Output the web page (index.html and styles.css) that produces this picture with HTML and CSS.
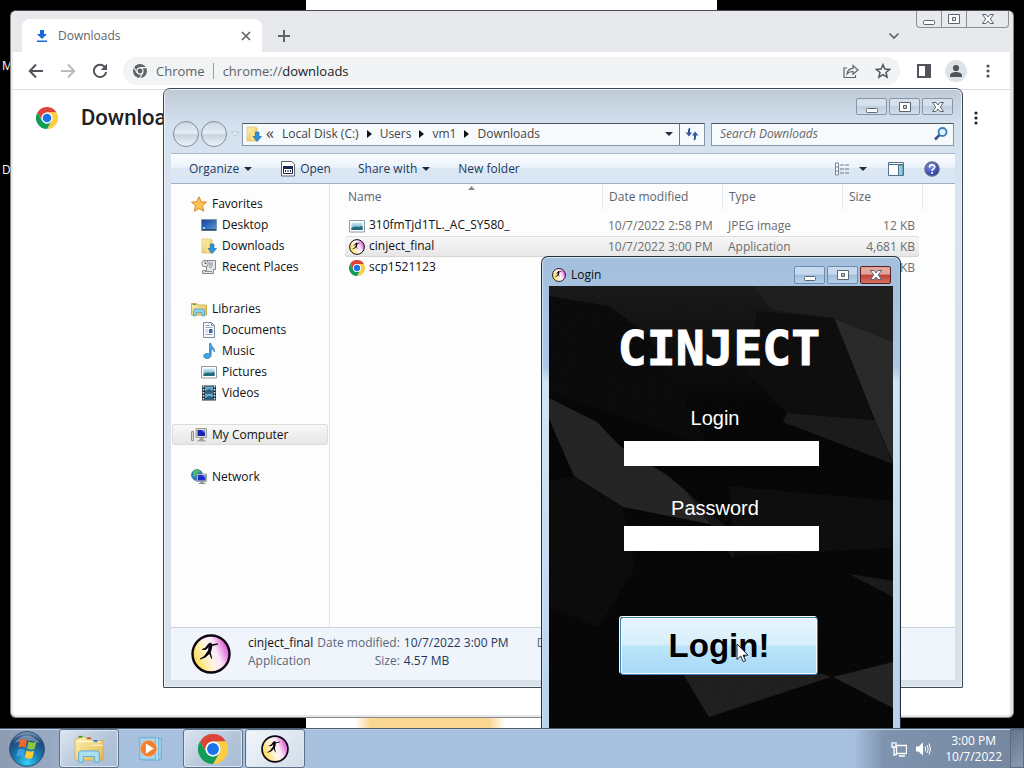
FILE: index.html
```html
<!DOCTYPE html>
<html lang="en">
<head>
    <meta charset="utf-8">
    <meta name="viewport" content="width=device-width, initial-scale=1">
    <title>Desktop</title>
    <link rel="stylesheet" href="styles.css">
</head>
<body>
<svg class="defs" aria-hidden="true">
    <defs>
        <linearGradient id="folder-g" x1="0" y1="0" x2="1" y2="1"><stop offset="0" stop-color="#fdf3b4"/><stop offset="1" stop-color="#e3b84e"/></linearGradient>
        <linearGradient id="screen-g" x1="0" y1="0" x2="1" y2="1"><stop offset="0" stop-color="#123f94"/><stop offset="1" stop-color="#5c9be0"/></linearGradient>
        <linearGradient id="ball-g" x1="0" y1=".7" x2="1" y2=".3"><stop offset="0" stop-color="#ffd83a"/><stop offset=".45" stop-color="#fff6e6"/><stop offset=".65" stop-color="#fbe6f8"/><stop offset="1" stop-color="#d63fd0"/></linearGradient>
        <linearGradient id="sky-g" x1="0" y1="0" x2="0" y2="1"><stop offset="0" stop-color="#cfeaf7"/><stop offset=".5" stop-color="#8cc5d8"/><stop offset="1" stop-color="#1f5d73"/></linearGradient>
        <linearGradient id="top-g" x1="0" y1="0" x2="0" y2="1"><stop offset="0" stop-color="#181818"/><stop offset="1" stop-color="#050505"/></linearGradient>
        <radialGradient id="orb-g" cx=".5" cy=".9" r=".9"><stop offset="0" stop-color="#35d0f5"/><stop offset=".4" stop-color="#1b7db5"/><stop offset=".8" stop-color="#1d4775"/><stop offset="1" stop-color="#8fa9c4"/></radialGradient>
        <radialGradient id="help-g" cx=".4" cy=".3" r=".8"><stop offset="0" stop-color="#7f93e8"/><stop offset="1" stop-color="#15299c"/></radialGradient>
    </defs>
    <symbol id="chrome" viewBox="0 0 48 48">
        <path fill="#db4437" d="M3.200 12A24 24 0 0 1 44.800 12H24A12 12 0 0 0 13.600 30z"/>
        <path fill="#ffcd40" d="M44.800 12A24 24 0 0 1 24 48L34.400 30A12 12 0 0 0 24 12z"/>
        <path fill="#0f9d58" d="M24 48A24 24 0 0 1 3.200 12L13.600 30A12 12 0 0 0 34.400 30z"/>
        <circle cx="24" cy="24" r="12" fill="#fff"/><circle cx="24" cy="24" r="9.500" fill="#1a73e8"/>
    </symbol>
    <symbol id="chrome-mono" viewBox="0 0 48 48">
        <circle cx="24" cy="24" r="24" fill="#5f6368"/>
        <circle cx="24" cy="24" r="10.500" fill="none" stroke="#f1f3f4" stroke-width="4"/>
        <path d="M24 12.500H45M14 30L3.500 12M34 30L23 48" stroke="#f1f3f4" stroke-width="4"/>
    </symbol>
    <symbol id="ball" viewBox="0 0 40 40">
        <circle cx="20" cy="20" r="18.500" fill="url(#ball-g)" stroke="#0c0410" stroke-width="2.400"/>
        <path d="M17.500 9.500l2.500-1 1 1.700 6-1v1.200l-5.700 1.500-.6 3.300-1 3.300 1.300 5-.6 2-2-5.500-4 3.500-5 2-.5-1 4-2.300 4-5.500.7-3.500-2.500 2.500-4 .3v-1l3-1.200z" fill="#0c0410"/>
    </symbol>
    <symbol id="min" viewBox="0 0 16 12"><rect x="2.500" y="7.500" width="11" height="4" rx="1" fill="#fdfdfd" stroke="#5b6572"/></symbol>
    <symbol id="max" viewBox="0 0 16 12"><path d="M2.500 1.500h11v9h-11zM6.500 4.500v3h3v-3z" fill="#fdfdfd" fill-rule="evenodd" stroke="#5b6572"/></symbol>
    <symbol id="close" viewBox="0 0 16 12"><path d="M2.500 1.500h3.500l2 2.500 2-2.500h3.500L10.300 6l3.200 4.500h-3.500L8 8l-2 2.500H2.500L5.700 6z" fill="#fdfdfd" stroke="#5b6572"/></symbol>
    <symbol id="star" viewBox="0 0 16 16"><path d="M8 .8l2.200 4.900 5.200.5-3.900 3.600 1.200 5.400L8 12.400l-4.700 2.800 1.200-5.400L.6 6.200l5.200-.5z" fill="#fdc454" stroke="#d8862a"/></symbol>
    <symbol id="desktop" viewBox="0 0 16 16"><path d="M.5 2.500h15v11H.5z" fill="url(#screen-g)" stroke="#7d97ae"/><path d="M1 12h14v1.500H1z" fill="#274866"/><path d="M2 10h2v2H2z" fill="#9fd4ff"/></symbol>
    <symbol id="downloads" viewBox="0 0 16 16"><path d="M1 1h8l2 1v13H1z" fill="url(#folder-g)" stroke="#dcb75c" stroke-width=".6"/><path d="M5 2v13l3-1V1z" fill="#f8e594"/><path d="M9.500 6h3.500v4.500h2.500L11.200 15.500 7 10.500h2.500z" fill="#2f94d6" stroke="#1565a5" stroke-width=".6"/></symbol>
    <symbol id="recent" viewBox="0 0 16 16"><path d="M5.500 1.500h9v9h-2v4h-11v-3h4z" fill="#e4e6e8" stroke="#85898e"/><path d="M8 4h4M8 6h4M8 8h3M4 12.500h7" stroke="#8c9196"/><circle cx="4" cy="4.500" r="3.300" fill="#e9eef1" stroke="#7f868d"/><path d="M4 2.500v2h1.500" fill="none" stroke="#555"/></symbol>
    <symbol id="libraries" viewBox="0 0 16 16"><path d="M.5 2.500h5l1 1.500h9v10H.5z" fill="url(#folder-g)" stroke="#cfae52"/><path d="M1.500 3.500h3.500" stroke="#53a83a"/><path d="M2.500 15V9.500q0-1.500 1.500-1.500h8q1.500 0 1.500 1.500V15H11v-3.500H5V15z" fill="#8bd3f2" stroke="#4399c8" stroke-width=".7"/></symbol>
    <symbol id="documents" viewBox="0 0 16 16"><path d="M2.500.5h8l3 3v12h-11z" fill="#fbfcfd" stroke="#7e8b98"/><path d="M10.500.5v3h3" fill="none" stroke="#7e8b98"/><path d="M4.500 3.500h4M4.500 5.500h7M4.500 8h2M4.500 10h2M4.500 12.500h7" stroke="#94a6c4"/><path d="M8 7h3.500v4H8z" fill="#3565a5"/></symbol>
    <symbol id="music" viewBox="0 0 16 16"><path d="M8.500.5h1.500c0 3.500 4 4 3.500 8.500-.5-2-1.500-2.700-3.300-3V12c0 2-1.700 3.500-4.200 3.500-4.500 0-4.500-5 .3-5 .8 0 1.500.1 2.200.5z" fill="#46a3e0" stroke="#2377b5" stroke-width=".7"/></symbol>
    <symbol id="pictures" viewBox="0 0 16 16"><path d="M.5 2.500h15v11.500H.5z" fill="#fdfefe" stroke="#8b9aa5"/><path d="M2.500 4.500h11V12h-11z" fill="url(#sky-g)"/><path d="M2.500 10l4-1.500 3 .5 4-1v4h-11z" fill="#236a78"/></symbol>
    <symbol id="videos" viewBox="0 0 16 16"><path d="M1 .5h14v15H1z" fill="#26323b"/><path d="M4 1.500h8V7.500H4zM4 8.500h8v6H4z" fill="#65a8d4"/><path d="M4 6l4-2 4 2v1.500H4zM4 13l4-2 4 1v2.500H4z" fill="#2b5b7c"/><path d="M2.500 1v14M13.500 1v14" stroke="#e8edf0" stroke-width="1.500" stroke-dasharray="1.500 1.500"/></symbol>
    <symbol id="computer" viewBox="0 0 16 16"><path d="M.5 4.500h2v9h-2z" fill="#d8d8d2" stroke="#92928c"/><path d="M5 1.500h10.500v9H5z" fill="#dedbd1" stroke="#a09c91"/><path d="M6.500 3h7.500v6H6.500z" fill="#1a23b5"/><path d="M10 3h4v3z" fill="#6b8df0"/><path d="M8.500 11h4v2h2v1.500H6.500V13h2z" fill="#a5a39b"/></symbol>
    <symbol id="network" viewBox="0 0 16 16"><circle cx="6" cy="6" r="5.500" fill="#2b80c6" stroke="#1b4f86" stroke-width=".6"/><path d="M2 3c2-3 6-2.500 7-1L7 4 5 7 2 8z" fill="#52bd5c"/><path d="M6 5h9.500v7.500H6z" fill="#d9d7d0" stroke="#76766f" stroke-width=".6"/><path d="M7 6h7.500v5.500H7z" fill="#1c2cc4"/><path d="M11 6h3.500v3z" fill="#7694f0"/><path d="M9.500 12.500h3v1.500h2V15h-7v-1h2z" fill="#8d8d88"/></symbol>
    <symbol id="dots" viewBox="0 0 16 16"><circle cx="8" cy="3" r="1.600"/><circle cx="8" cy="8" r="1.600"/><circle cx="8" cy="13" r="1.600"/></symbol>
</svg>

<main class="desktop">
    <div class="wallpaper"></div>
    <span class="desk-label desk-label-1">M</span>
    <span class="desk-label desk-label-2">D</span>

    <section class="browser" aria-label="Downloads browser">
        <div class="tabs">
            <div class="tab">
                <svg class="i16" viewBox="0 0 16 16"><path d="M6 2h4v4h3L8 11 3 6h3zM3 12.500h10v1.500H3z" fill="#1967d2"/></svg>
                <span>Downloads</span>
                <button class="plain" aria-label="Close tab"><svg class="i16" viewBox="0 0 16 16"><path d="M4 4l8 8M12 4l-8 8" stroke="#5f6368" stroke-width="1.700"/></svg></button>
            </div>
            <button class="plain new-tab" aria-label="New tab"><svg class="i16" viewBox="0 0 16 16"><path d="M8 2v12M2 8h12" stroke="#5f6368" stroke-width="2"/></svg></button>
            <button class="plain tab-search" aria-label="Search tabs"><svg class="i16" viewBox="0 0 16 16"><path d="M3.500 5.500L8 10l4.500-4.500" fill="none" stroke="#5f6368" stroke-width="1.700"/></svg></button>
        </div>
        <div class="browser-caps">
            <button aria-label="Minimize"><svg><use href="#min"/></svg></button>
            <button aria-label="Maximize"><svg><use href="#max"/></svg></button>
            <button class="wide" aria-label="Close"><svg><use href="#close"/></svg></button>
        </div>
        <div class="urlbar">
            <button class="plain" aria-label="Back"><svg class="i16" viewBox="0 0 16 16"><path d="M15 8H2M8 1.500L1.800 8 8 14.500" fill="none" stroke="#50545a" stroke-width="2"/></svg></button>
            <button class="plain" aria-label="Forward"><svg class="i16" viewBox="0 0 16 16"><path d="M1 8h13M8 1.500L14.200 8 8 14.500" fill="none" stroke="#babcbe" stroke-width="2"/></svg></button>
            <button class="plain" aria-label="Reload"><svg class="i16" viewBox="0 0 16 16"><path d="M13.300 4.500A6.200 6.200 0 1 0 14.200 9" fill="none" stroke="#50545a" stroke-width="2"/><path d="M15 .8v6.200H8.800z" fill="#50545a"/></svg></button>
            <div class="omnibox">
                <svg class="i14"><use href="#chrome-mono"/></svg>
                <span class="origin">Chrome</span>
                <span class="url">chrome://<b>downloads</b></span>
                <button class="plain" aria-label="Share"><svg class="i16" viewBox="0 0 16 16"><path d="M4 5H1v9.500h11.500V12M4 11c.5-4 2.500-5.500 6-5.700V2.500L15 7l-5 4.200V8.500C7.500 8.500 5.500 9 4 11z" fill="none" stroke="#5f6368" stroke-width="1.200"/></svg></button>
                <button class="plain" aria-label="Bookmark"><svg class="i16" viewBox="0 0 16 16"><path d="M8 1.800l1.900 4.300 4.700.4-3.600 3 1.100 4.700L8 11.700l-4.100 2.500L5 9.500l-3.600-3 4.700-.4z" fill="none" stroke="#50545a" stroke-width="1.500"/></svg></button>
            </div>
            <button class="plain" aria-label="Side panel"><svg class="i16" viewBox="0 0 16 16"><path d="M1 1h14v14H1zM3 3v10h6V3z" fill="#50545a" fill-rule="evenodd"/></svg></button>
            <button class="plain avatar" aria-label="Profile"><svg class="i16" viewBox="0 0 16 16"><circle cx="8" cy="5" r="3.100"/><path d="M2 14v-1.500C2 10 5.500 9 8 9s6 1 6 3.500V14z"/></svg></button>
            <button class="plain" aria-label="Menu"><svg class="i16" fill="#50545a"><use href="#dots"/></svg></button>
        </div>
        <header class="page-head">
            <svg class="page-logo"><use href="#chrome"/></svg>
            <h1>Downloads</h1>
            <button class="plain" aria-label="More actions"><svg class="i16" fill="#202124"><use href="#dots"/></svg></button>
        </header>
    </section>

    <section class="explorer" aria-label="Explorer">
        <div class="caps">
            <button aria-label="Minimize"><svg><use href="#min"/></svg></button>
            <button aria-label="Maximize"><svg><use href="#max"/></svg></button>
            <button aria-label="Close"><svg><use href="#close"/></svg></button>
        </div>
        <div class="address-row">
            <button class="nav-btn" aria-label="Back"></button>
            <button class="nav-btn" aria-label="Forward"></button>
            <svg class="nav-more" viewBox="0 0 8 6"><path d="M.5 1h7L4 5z" fill="#f4f8fb" stroke="#a9b8c6" stroke-width=".8"/></svg>
            <nav class="address" aria-label="Path">
                <svg class="i16"><use href="#downloads"/></svg>
                <span class="more">«</span>
                <a href="#">Local Disk (C:)</a><i></i>
                <a href="#">Users</a><i></i>
                <a href="#">vm1</a><i></i>
                <a href="#">Downloads</a>
                <span class="caret"></span>
                <button class="refresh" aria-label="Refresh"><svg class="i16" viewBox="0 0 16 16"><path d="M6.500 1.500Q4 2 4 4v2.500H1.500L5 10.500 8 6.500H6V4zM9.500 14.500Q12 14 12 12V9.500h2.500L11 5.500 8 9.500h2V12z" fill="#33589c"/></svg></button>
            </nav>
            <div class="search">
                <input type="text" aria-label="Search Downloads" placeholder="Search Downloads">
                <svg class="i16" viewBox="0 0 16 16"><circle cx="9.500" cy="6" r="4" fill="#dff1fb" stroke="#3c7fb4" stroke-width="1.800"/><path d="M6.500 9L2 13.500" stroke="#35568a" stroke-width="2.500"/></svg>
            </div>
        </div>
        <div class="toolbar">
            <button class="organize">Organize<span class="caret"></span></button>
            <button class="open"><svg class="i16" viewBox="0 0 16 16"><path d="M1.500.5h10l3 2.500v12h-13z" fill="#fff" stroke="#5a6169"/><path d="M3.500 5.500h9v7h-9z" fill="#fff" stroke="#1c2452"/><path d="M3 5h10v3H3z" fill="#1c2452"/><path d="M5.500 9v2M8 9v2M10.500 9v2" stroke="#1c2452"/></svg>Open</button>
            <button class="share">Share with<span class="caret"></span></button>
            <button class="folder">New folder</button>
            <button class="view" aria-label="Change view"><svg class="i16" viewBox="0 0 16 16"><path d="M1.500 2v12h3V2zM1.500 6h3M1.500 10h3" fill="#fff" stroke="#7a8794"/><path d="M6 4h10M6 8h10M6 12h10" stroke="#6a7890" stroke-dasharray="4 1"/></svg><span class="caret"></span></button>
            <button class="preview" aria-label="Preview pane"><svg class="i16" viewBox="0 0 16 16"><path d="M.5 1.500h15v13H.5z" fill="#fff" stroke="#51718c"/><path d="M.5 3.500h15" stroke="#51718c"/><path d="M10.500 4v10.500H15V4z" fill="#8fd0da" stroke="#51718c"/></svg></button>
            <button class="help" aria-label="Help"><svg class="i16" viewBox="0 0 16 16"><circle cx="8" cy="8" r="7.200" fill="url(#help-g)" stroke="#6d7280" stroke-width="1.200"/><path d="M5.500 6.500C5.500 3 10.800 3 10.700 6c0 1.800-2.600 1.900-2.600 3.900" fill="none" stroke="#fff" stroke-width="1.700"/><circle cx="8.100" cy="12" r="1.100" fill="#fff"/></svg></button>
        </div>
        <div class="content">
            <aside class="tree">
                <ul>
                    <li class="root"><svg><use href="#star"/></svg>Favorites</li>
                    <li><svg><use href="#desktop"/></svg>Desktop</li>
                    <li><svg><use href="#downloads"/></svg>Downloads</li>
                    <li><svg><use href="#recent"/></svg>Recent Places</li>
                </ul>
                <ul>
                    <li class="root"><svg><use href="#libraries"/></svg>Libraries</li>
                    <li><svg><use href="#documents"/></svg>Documents</li>
                    <li><svg><use href="#music"/></svg>Music</li>
                    <li><svg><use href="#pictures"/></svg>Pictures</li>
                    <li><svg><use href="#videos"/></svg>Videos</li>
                </ul>
                <ul><li class="root picked"><svg><use href="#computer"/></svg>My Computer</li></ul>
                <ul><li class="root"><svg><use href="#network"/></svg>Network</li></ul>
            </aside>
            <div class="files">
                <table>
                    <thead>
                        <tr><th class="c-name">Name<svg class="sort" viewBox="0 0 7 4"><path d="M0 4l3.500-4L7 4z" fill="#7f8a94"/></svg></th><th class="c-date">Date modified</th><th class="c-type">Type</th><th class="c-size">Size</th></tr>
                    </thead>
                    <tbody>
                        <tr><td><svg><use href="#pictures"/></svg>310fmTjd1TL._AC_SY580_</td><td>10/7/2022 2:58 PM</td><td>JPEG image</td><td>12 KB</td></tr>
                        <tr class="picked"><td><svg><use href="#ball"/></svg>cinject_final</td><td>10/7/2022 3:00 PM</td><td>Application</td><td>4,681 KB</td></tr>
                        <tr><td><svg><use href="#chrome"/></svg>scp1521123</td><td></td><td></td><td>1 KB</td></tr>
                    </tbody>
                </table>
            </div>
        </div>
        <footer class="details">
            <svg class="details-icon"><use href="#ball"/></svg>
            <div class="who"><strong>cinject_final</strong><span>Application</span></div>
            <dl>
                <dt>Date modified:</dt><dd>10/7/2022 3:00 PM</dd>
                <dt>Size:</dt><dd>4.57 MB</dd>
            </dl>
            <span class="created">Date created:</span>
        </footer>
    </section>

    <section class="login" aria-label="Login window">
        <div class="login-title">
            <svg class="i14"><use href="#ball"/></svg>
            <span>Login</span>
            <div class="login-caps">
                <button aria-label="Minimize"><svg><use href="#min"/></svg></button>
                <button aria-label="Maximize"><svg><use href="#max"/></svg></button>
                <button class="red" aria-label="Close"><svg><use href="#close"/></svg></button>
            </div>
        </div>
        <form class="login-form">
            <svg class="facets" viewBox="0 0 344 442" preserveAspectRatio="none" aria-hidden="true">
                <filter id="grain"><feTurbulence type="fractalNoise" baseFrequency=".8" numOctaves="2"/><feColorMatrix values="0 0 0 0 .5  0 0 0 0 .5  0 0 0 0 .5  .5 0 0 0 -.17"/></filter>
                <path fill="url(#top-g)" d="M0 0h344v120H0z"/>
                <path fill="#090909" d="M0 10l60 10 40 30 60 110-90-30L0 105z"/>
                <path fill="#1d1d1d" d="M204 0h140v56l-60-24-60-8z"/>
                <path fill="#0c0c0c" d="M208 25l76 7 42 102-88-7-40-40z"/>
                <path fill="#282828" d="M286 33l58 23v120l-18-42z"/>
                <path fill="#191919" d="M238 127l88 7 18 44-66-25-44-17z"/>
                <path fill="#232323" d="M0 112l48 24 23 24 47 29 20 17 10 14 13 18-87-17-49-31-25-57z"/>
                <path fill="#141414" d="M138 206l52 46-6 21-23-35z"/>
                <path fill="#0c0c0c" d="M180 200l164 15v47l-159 8z"/>
                <path fill="#0a0a0a" d="M25 190l49 31 12 60-36 60-50-20V195z"/>
                <path fill="#191919" d="M300 288l44 7v16z"/>
                <path fill="#1e1e1e" d="M134 388h140l8 3-122 40z"/>
                <path fill="#232323" d="M284 391l60-15v46z"/>
                <rect width="344" height="442" filter="url(#grain)" opacity=".14"/>
            </svg>
            <h2>CINJECT</h2>
            <label for="user">Login</label>
            <input id="user" type="text">
            <label for="pass">Password</label>
            <input id="pass" class="pass" type="password">
            <button type="button">Login!</button>
        </form>
    </section>

    <svg class="cursor" viewBox="0 0 13 20"><path d="M1 1v15.500l3.700-3.500 2.500 5.700 2.400-1-2.500-5.500H12z" fill="#fff" stroke="#222"/></svg>
</main>

<footer class="taskbar">
    <button class="start" aria-label="Start">
        <svg viewBox="0 0 36 36"><circle cx="18" cy="18" r="17.300" fill="url(#orb-g)" stroke="#26496d"/><path d="M5 12Q18-3 31 12 18 7 5 12z" fill="#fff" opacity=".35"/><path d="M11 9q3-1.500 7 .5L16.500 17q-4-2-7-.5z" fill="#f0652a"/><path d="M19.500 10.500q4 2 8 .3L25.500 18q-4 1.500-7.500-.5z" fill="#8cc63e"/><path d="M9 18.500q3-1.500 7 .5l-1.700 7q-3.500-2-7-.5z" fill="#39a0e6"/><path d="M17.500 19.500q4 2 7.700.3L23.300 27q-4 1.500-7.500-.5z" fill="#ffcb2e"/></svg>
    </button>
    <button class="task" aria-label="Explorer"><svg viewBox="0 0 32 32"><path d="M1 5h4V3h7l1 2h6v2h12v21H1z" fill="url(#folder-g)" stroke="#c9a750" stroke-width=".7"/><path d="M3 8h25M19 12h12" stroke="#fffbe0"/><path d="M5 3h4" stroke="#3c9e35" stroke-width="2"/><path d="M14 4.500h4" stroke="#d2503a" stroke-width="2"/><path d="M21 7.500h4" stroke="#2e7cd2" stroke-width="2"/><path d="M5 30V21q0-3 3-3h16q3 0 3 3v9h-5v-6H10v6z" fill="#a9def3" stroke="#55a8d6"/></svg></button>
    <button class="task flat" aria-label="Media player"><svg viewBox="0 0 32 32"><path d="M9 5h18v22H9z" fill="#9ed0ea" stroke="#5fa6cd" stroke-width=".8"/><path d="M7 4h17v24H7z" fill="#bfe0f2" stroke="#5fa6cd" stroke-width=".8"/><path d="M4 4h17v23H4z" fill="#a8d4ec" stroke="#5fa6cd" stroke-width=".8"/><circle cx="13.500" cy="15.500" r="8.800" fill="#f0802e" stroke="#f8c090" stroke-width=".8"/><path d="M10.500 10v11l8.500-5.500z" fill="#fff"/></svg></button>
    <button class="task" aria-label="Chrome"><svg><use href="#chrome"/></svg></button>
    <button class="task active" aria-label="cinject_final"><svg><use href="#ball"/></svg></button>
    <div class="tray">
        <svg class="i16" viewBox="0 0 16 16"><path d="M5.500 4.500h10v8h-10zM8 15h6M3 6v9M3 13.500h3" fill="none" stroke="#fff" stroke-width="1.300"/><path d="M1 1v5h4V1M3 1v2" fill="none" stroke="#fff" stroke-width="1.300"/></svg>
        <svg class="i16" viewBox="0 0 16 16"><path d="M1 5.500h2.500L8 1.500v13l-4.500-4H1z" fill="#fff"/><path d="M10 5.500q1.500 2.500 0 5M12 4q2.500 4 0 8M14 2.500q3 5.500 0 11" fill="none" stroke="#fff"/></svg>
        <time>3:00 PM<br>10/7/2022</time>
        <button class="peek" aria-label="Show desktop"></button>
    </div>
</footer>
</body>
</html>
```

FILE: styles.css
```css
* {
    box-sizing: border-box;
}

html, body {
    height: 100%;
}

body {
    margin: 0;
    display: flex;
    flex-direction: column;
    overflow: hidden;
    font: 12px/16px "Open Sans", "Noto Sans", sans-serif;
    color: #111;
    background: #000;
}

button, input {
    font: inherit;
    color: inherit;
}

button {
    padding: 0;
    border: none;
    background: none;
}

svg {
    display: block;
    flex: none;
}

.defs {
    position: absolute;
    width: 0;
    height: 0;
}

.i16 {
    width: 16px;
    height: 16px;
}

.i14 {
    width: 14px;
    height: 14px;
}

.desktop {
    position: relative;
    flex: 1;
    min-height: 0;
    overflow: hidden;
}

.wallpaper {
    position: absolute;
    top: 0;
    bottom: 0;
    left: 306px;
    width: 411px;
    background: radial-gradient(ellipse 75px 60px at 124px 100%, #fbd794 80%, #fff);
}

.desk-label {
    position: absolute;
    left: 2px;
    color: #fff;
}

.desk-label-1 {
    top: 58px;
}

.desk-label-2 {
    top: 162px;
}

/* browser window */
.browser {
    position: absolute;
    top: 10px;
    bottom: 10px;
    left: 10px;
    right: 10px;
    padding: 0 1px;
    border: 1px solid #85878a;
    border-top-color: #4a4c4f;
    border-radius: 6px;
    background: #fff;
    box-shadow: inset 0 -2px #e8e8e8, inset -3px 0 #e4e4e6, inset 2px 0 #ececee;
    overflow: hidden;
}

.tabs {
    display: flex;
    align-items: center;
    height: 41px;
    padding: 8px 110px 0 10px;
    background: #e8e9ec;
}

.tab {
    display: flex;
    align-items: center;
    gap: 8px;
    width: 240px;
    height: 33px;
    padding: 0 8px 0 12px;
    border-radius: 8px 8px 0 0;
    background: #fff;
    color: #5f6368;
}

.tab span {
    flex: 1;
}

.new-tab {
    margin-left: 14px;
}

.tab-search {
    margin-left: auto;
}

.browser-caps {
    position: absolute;
    top: 0;
    right: 4px;
    display: flex;
    border: 1px solid #8c8e91;
    border-top: none;
    border-radius: 0 0 4px 4px;
}

.browser-caps button {
    display: grid;
    place-items: center;
    width: 25px;
    height: 16px;
    border-right: 1px solid #8c8e91;
}

.browser-caps .wide {
    width: 41px;
    border-right: none;
}

.browser-caps svg, .caps svg, .login-caps svg {
    width: 16px;
    height: 12px;
}

.urlbar {
    display: flex;
    align-items: center;
    gap: 16px;
    height: 38px;
    padding: 0 16px;
    border-bottom: 1px solid #dadce0;
}

.omnibox {
    flex: 1;
    display: flex;
    align-items: center;
    gap: 9px;
    height: 28px;
    margin-left: -1px;
    padding: 0 9px 0 10px;
    border-radius: 14px;
    background: #f1f3f4;
    font-size: 13px;
    color: #5f6368;
}

.origin {
    padding-right: 8px;
    border-right: 1px solid #9aa0a6;
}

.url {
    flex: 1;
}

.url b {
    font-weight: 400;
    color: #202124;
}

.omnibox button + button {
    margin-left: 7px;
}

.avatar {
    padding: 3px;
    margin: 0 -3px;
    border-radius: 50%;
    background: #dde3e6;
    fill: #50545a;
}

.page-head {
    display: flex;
    align-items: center;
    height: 56px;
    padding: 0 28px 0 24px;
}

.page-logo {
    width: 22px;
    height: 22px;
}

.page-head h1 {
    flex: 1;
    margin: 0 0 0 23px;
    font: 500 22px/28px Roboto, sans-serif;
    color: #202124;
}

/* explorer window */
.explorer {
    position: absolute;
    top: 88px;
    bottom: 40px;
    left: 163px;
    right: 61px;
    display: flex;
    flex-direction: column;
    padding: 0 7px 7px;
    border: 1px solid #3f4850;
    border-radius: 7px 7px 1px 1px;
    background: linear-gradient(#bfcad6, #d3e0ee 35px, #d9e4f0 100px, #d8e0e9);
    box-shadow: inset 0 0 0 1px #eaf1f7;
}

.caps {
    display: flex;
    justify-content: flex-end;
    gap: 2px;
    padding: 9px 2px 0;
}

.caps button {
    display: grid;
    place-items: center;
    width: 31px;
    height: 17px;
    border: 1px solid #8695a8;
    border-radius: 2px;
    background: linear-gradient(#d5e0ec 45%, #c0cedd 50%, #d2deeb);
}

.address-row {
    display: flex;
    align-items: center;
    height: 38px;
}

.nav-btn {
    width: 26px;
    height: 26px;
    margin-left: 2px;
    border: 1px solid #7e8c9b;
    border-radius: 50%;
    background: linear-gradient(#cbd7e3, #e5edf4 45%, #c8d4e0 55%, #eef4f9);
}

.nav-more {
    width: 8px;
    height: 6px;
    margin: 0 3px 0 4px;
}

.address {
    flex: 2;
    display: flex;
    align-items: center;
    height: 23px;
    margin-right: 6px;
    padding-left: 3px;
    border: 1px solid #8596a7;
    border-top-color: #4d565f;
    background: #f6fafd;
    color: #444;
}

.address a {
    color: inherit;
    text-decoration: none;
}

.address .more {
    margin: 0 8px 2px 4px;
    font-size: 16px;
}

.address i {
    margin: 0 8px;
    border-left: 5px solid #111;
    border-top: 4px solid transparent;
    border-bottom: 4px solid transparent;
}

.caret {
    display: inline-block;
    border-top: 4px solid #222b3c;
    border-left: 4px solid transparent;
    border-right: 4px solid transparent;
}

.address .caret {
    margin: 0 6px 0 auto;
}

.refresh {
    display: grid;
    place-items: center;
    width: 25px;
    height: 100%;
    border-left: 1px solid #6d7985;
}

.search {
    flex: 1;
    display: flex;
    align-items: center;
    min-width: 242px;
    height: 23px;
    margin-right: 1px;
    padding: 0 4px 0 8px;
    border: 1px solid #8596a7;
    border-top-color: #4d565f;
    background: #f6fafd;
}

.search input {
    flex: 1;
    min-width: 0;
    padding: 0;
    border: none;
    background: none;
}

.search input::placeholder {
    font-style: italic;
    color: #666;
}

.toolbar {
    display: flex;
    align-items: center;
    height: 31px;
    padding: 0 15px 0 18px;
    border-top: 1px solid #a9b7c7;
    border-bottom: 1px solid #9eb0c4;
    background: linear-gradient(#fbfdff, #ecf3fb 45%, #dce7f4 50%, #dbe6f4);
    color: #1e395b;
}

.toolbar button {
    display: flex;
    align-items: center;
    gap: 5px;
}

.toolbar .open {
    gap: 4px;
    margin: 0 27px 0 28px;
}

.toolbar .folder {
    margin: 0 auto 0 28px;
}

.toolbar .view {
    gap: 9px;
    margin-right: 21px;
}

.toolbar .preview {
    margin-right: 20px;
}

.content {
    flex: 1;
    display: flex;
    min-height: 0;
    background: #fdfdfe;
}

.tree {
    width: 159px;
    padding-top: 9px;
    border-right: 1px solid #dde4ec;
}

.tree ul {
    margin: 0 0 21px;
    padding: 0;
    list-style: none;
}

.tree li {
    display: flex;
    align-items: center;
    gap: 5px;
    height: 21px;
    padding-left: 30px;
}

.tree .root {
    padding-left: 20px;
}

.tree svg, .files td svg {
    width: 16px;
    height: 16px;
}

.tree .picked {
    margin: 0 1px;
    padding-left: 18px;
    border: 1px solid #dcdcdc;
    border-radius: 2px;
    background: linear-gradient(#f8f8f8, #e6e6e6);
}

.files {
    flex: 1;
    padding-left: 15px;
    overflow: hidden;
}

.files table {
    width: 574px;
    table-layout: fixed;
    border-spacing: 0;
}

.files th {
    position: relative;
    height: 26px;
    padding: 0 0 0 6px;
    border-left: 1px solid #e6ebf1;
    text-align: left;
    font-weight: 400;
    color: #5c6470;
}

.files .c-name {
    padding-left: 3px;
    border-left: none;
}

.c-date, .c-type {
    width: 120px;
}

.c-size {
    width: 77px;
}

.c-size::after {
    content: "";
    position: absolute;
    top: 0;
    bottom: 0;
    right: -4px;
    border-right: 1px solid #e6ebf1;
}

.sort {
    position: absolute;
    top: 2px;
    left: 123px;
    width: 7px;
    height: 4px;
}

.files tbody::before {
    content: "";
    display: block;
    height: 5px;
}

.files td {
    height: 21px;
    padding: 0 0 0 6px;
    color: #6d6d6d;
}

.files td:first-child {
    padding-left: 4px;
    color: #111;
}

.files td svg {
    display: inline-block;
    margin-right: 4px;
    vertical-align: middle;
}

.files td:last-child {
    padding-right: 4px;
    text-align: right;
}

.files .picked td {
    background: linear-gradient(#f8f8f8, #e6e6e6);
    box-shadow: inset 0 1px #dedede, inset 0 -1px #d6d6d6;
}

.files .picked td:first-child {
    border-radius: 3px 0 0 3px;
}

.files .picked td:last-child {
    border-radius: 0 3px 3px 0;
}

.details {
    display: flex;
    height: 53px;
    padding: 6px 0 0 20px;
    border-top: 1px solid #c9d4e1;
    background: #f0f4fb;
    line-height: 18px;
    color: #5a6779;
    white-space: nowrap;
}

.details-icon {
    width: 40px;
    height: 40px;
    margin-right: 17px;
}

.who {
    display: flex;
    flex-direction: column;
}

.who strong {
    font-weight: 400;
    color: #111;
}

.details dl {
    display: grid;
    grid-template-columns: auto auto;
    grid-auto-rows: 18px;
    column-gap: 4px;
    margin: 0 28px 0 4px;
}

.details dt {
    text-align: right;
}

.details dd {
    margin: 0;
    color: #1e395b;
}

/* login window */
.login {
    position: absolute;
    top: 256px;
    bottom: 0;
    left: 541px;
    right: 123px;
    display: flex;
    flex-direction: column;
    padding: 0 7px;
    border: 1px solid #22303c;
    border-bottom: none;
    border-radius: 7px 7px 0 0;
    background: linear-gradient(#a3bfdd, #adc8e4 110px, #d4e4f4 125px, #b9d2ea);
    box-shadow: inset 0 1px #dce9f5, inset 1px 0 #cfe1f2, inset -1px 0 #8fd6f5;
}

.login-title {
    display: flex;
    align-items: center;
    gap: 5px;
    height: 29px;
    padding: 6px 2px 0 3px;
}

.login-caps {
    display: flex;
    gap: 2px;
    margin-left: auto;
}

.login-caps button {
    display: grid;
    place-items: center;
    width: 31px;
    height: 18px;
    border: 1px solid #6d8db0;
    border-radius: 2px;
    background: linear-gradient(#c6d9ed 45%, #a2bddb 50%, #b5d0ea);
}

.login-caps .red {
    border-color: #5a1e1a;
    background: linear-gradient(#e2a49c 45%, #bd4136 50%, #d4705e);
}

.login-form {
    position: relative;
    flex: 1;
    display: flex;
    flex-direction: column;
    align-items: center;
    background: #050505;
    color: #fff;
    font-family: "Liberation Sans", sans-serif;
}

.facets {
    position: absolute;
    inset: 0;
    width: 100%;
    height: 100%;
}

.login-form > :not(.facets) {
    position: relative;
}

.login-form h2 {
    margin: 34px 4px 0 0;
    font: 700 48px/56px "DejaVu Sans Mono", monospace;
    -webkit-text-stroke: 1px #fff;
}

.login-form label {
    margin: 30px 12px 11px 0;
    font-size: 20px;
    line-height: 24px;
}

.login-form input {
    width: 195px;
    height: 25px;
    padding: 2px 4px;
    border: none;
    background: #fff;
    color: #000;
}

.login-form .pass {
    margin-top: -5px;
}

.login-form button {
    width: 198px;
    height: 58px;
    margin: 66px 4px 0 0;
    border: 1px solid #3c7fb1;
    border-radius: 3px;
    background: linear-gradient(#e9f6fd, #d6eefb 48%, #bce5fb 50%, #a6d9f4);
    box-shadow: -1px -1px #fff, inset 0 0 0 1px #f2faff;
    font-size: 33px;
    font-weight: 700;
    color: #000;
}

.cursor {
    position: absolute;
    top: 643px;
    left: 736px;
    width: 13px;
    height: 20px;
}

/* taskbar */
.taskbar {
    display: flex;
    height: 40px;
    border-top: 1px solid #4d5d70;
    background: linear-gradient(90deg, #8c9db3, #98aac1 50px, #a6c0de 120px, #a6c0de calc(100% - 170px), #7e93ae calc(100% - 140px), #75879f);
    box-shadow: inset 0 1px #bccfe3;
}

.start {
    width: 54px;
    margin-right: 5px;
    display: grid;
    place-items: center;
}

.start svg {
    width: 36px;
    height: 36px;
}

.task {
    display: grid;
    place-items: center;
    width: 60px;
    margin-right: 2px;
    border: 1px solid #5b6f88;
    border-radius: 3px;
    background: linear-gradient(135deg, #dde6f0, #b3c4d8 60%, #a9bdd5);
    box-shadow: inset 0 0 0 1px #dce7f2;
}

.task.flat {
    border-color: transparent;
    background: none;
    box-shadow: none;
}

.task.active {
    background: linear-gradient(135deg, #f2f6fa, #d0dce9);
}

.task svg {
    width: 30px;
    height: 30px;
}

.task.active svg {
    width: 28px;
    height: 28px;
}

.tray {
    display: flex;
    align-items: center;
    gap: 8px;
    margin-left: auto;
    color: #fff;
}

.tray time {
    margin-left: 6px;
    text-align: center;
}

.peek {
    width: 14px;
    height: 100%;
    border: 1px solid #5c6d83;
    background: linear-gradient(135deg, #65758b, #8b9bb1);
}
```
